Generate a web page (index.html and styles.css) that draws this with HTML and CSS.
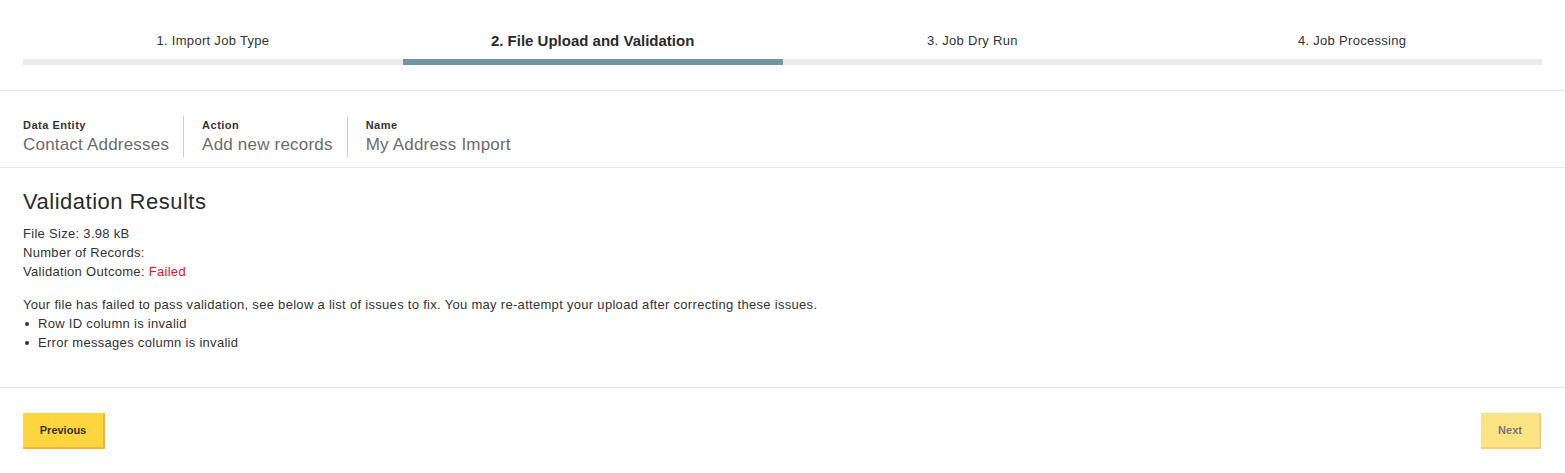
FILE: index.html
```html
<!DOCTYPE html>
<html>
<head>
<meta charset="utf-8">
<link rel="stylesheet" href="styles.css">
</head>
<body>
<div class="stepper">
  <div class="step done"><div class="step-label">1. Import Job Type</div><div class="step-bar"></div></div>
  <div class="step active"><div class="step-label">2. File Upload and Validation</div><div class="step-bar"></div></div>
  <div class="step"><div class="step-label">3. Job Dry Run</div><div class="step-bar"></div></div>
  <div class="step"><div class="step-label">4. Job Processing</div><div class="step-bar"></div></div>
</div>
<div class="summary">
  <div class="summary-item"><div class="summary-label">Data Entity</div><div class="summary-value">Contact Addresses</div></div>
  <div class="summary-item"><div class="summary-label">Action</div><div class="summary-value">Add new records</div></div>
  <div class="summary-item last"><div class="summary-label">Name</div><div class="summary-value">My Address Import</div></div>
</div>
<div class="results">
  <h2 class="results-title">Validation Results</h2>
  <div class="stats">
    <div>File Size: 3.98 kB</div>
    <div>Number of Records:</div>
    <div>Validation Outcome: <span class="failed">Failed</span></div>
  </div>
  <p class="message">Your file has failed to pass validation, see below a list of issues to fix. You may re-attempt your upload after correcting these issues.</p>
  <ul class="issues">
    <li>Row ID column is invalid</li>
    <li>Error messages column is invalid</li>
  </ul>
</div>
<div class="footer">
  <button class="btn">Previous</button>
  <button class="btn disabled">Next</button>
</div>
</body>
</html>
```
FILE: styles.css
```css
body {
  margin: 0;
  font-family: "Liberation Sans", Arial, sans-serif;
  color: #333;
  background: #fff;
}
.stepper {
  display: flex;
  padding: 30px 23px 25px;
  border-bottom: 1px solid #e8e8e8;
}
.step { flex: 1; }
.step-label {
  text-align: center;
  font-size: 13px;
  line-height: 20px;
  letter-spacing: 0.3px;
  color: #333;
  padding-top: 1px;
  margin-bottom: 8px;
}
.step.active .step-label {
  font-size: 15px;
  font-weight: bold;
  letter-spacing: 0;
  color: #2b2b2b;
}
.step-bar {
  height: 6px;
  background: #ebebeb;
}
.step.active .step-bar { background: #6f979d; }
.summary {
  display: flex;
  padding: 25px 23px 10px;
  border-bottom: 1px solid #e8e8e8;
}
.summary-item {
  padding: 0 14px 0 18px;
  border-right: 1px solid #cfcfcf;
}
.summary-item:first-child { padding-left: 0; }
.summary-item.last { border-right: none; }
.summary-label {
  font-size: 11px;
  font-weight: bold;
  letter-spacing: 0.5px;
  line-height: 15px;
  padding-top: 2px;
  color: #333;
}
.summary-value {
  font-size: 17px;
  line-height: 24px;
  letter-spacing: 0.2px;
  color: #6b6b6b;
}
.results {
  padding: 21px 23px 35px;
  border-bottom: 1px solid #e8e8e8;
  font-size: 13px;
  line-height: 19px;
  letter-spacing: 0.3px;
}
.results-title {
  margin: 0 0 9px;
  font-size: 22px;
  line-height: 26px;
  font-weight: normal;
  letter-spacing: 0.5px;
  color: #2b2b2b;
}
.failed { color: #e8131f; }
.message { margin: 14px 0 0; }
.issues {
  list-style: none;
  margin: 0;
  padding: 0;
}
.issues li {
  position: relative;
  padding-left: 15px;
}
.issues li::before {
  content: "";
  position: absolute;
  left: 2px;
  top: 8px;
  width: 4px;
  height: 4px;
  border-radius: 50%;
  background: #333;
}
.footer {
  display: flex;
  justify-content: space-between;
  padding: 25px 24px 0 23px;
}
.btn {
  width: 82px;
  height: 36px;
  box-sizing: border-box;
  background: #fdd53d;
  border: none;
  border-right: 2px solid #f0b43c;
  border-bottom: 2px solid #f0b43c;
  font-family: inherit;
  font-size: 11px;
  font-weight: bold;
  color: #333;
  padding: 0;
}
.btn.disabled {
  width: 60px;
  background: #fee384;
  border-color: #f5cf7e;
  color: #777;
}
```
